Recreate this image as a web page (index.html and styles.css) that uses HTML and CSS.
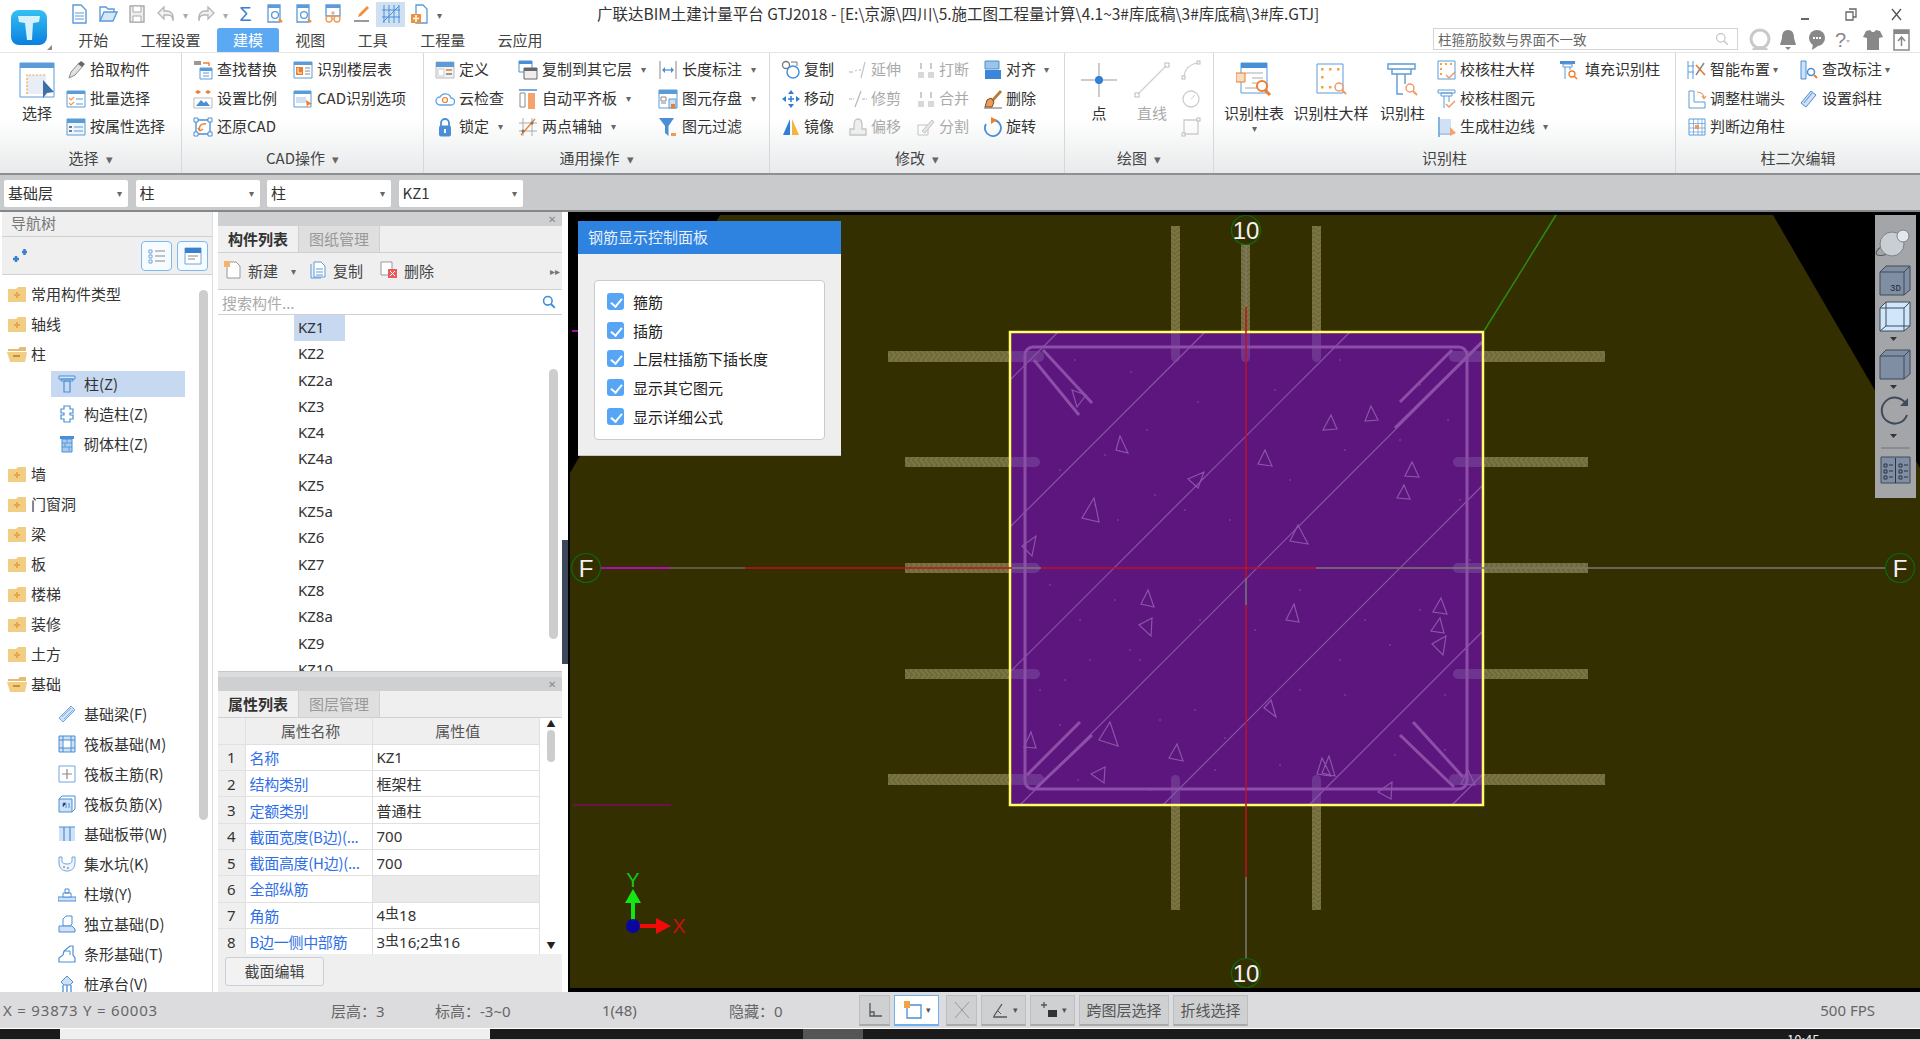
FILE: index.html
```html
<!DOCTYPE html>
<html lang="en">
<head>
    <meta charset="UTF-8">
    <title>广联达BIM土建计量平台 GTJ2018</title>
    <link rel="stylesheet" href="styles.css">
</head>
<body>
    <!-- shared icons -->
    <svg class="defs" width="0" height="0">
        <defs>
            <symbol id="q-new" viewBox="0 0 20 20"><path d="M4 1h8l5 5v13H4z" fill="#fff" stroke="#5b9bd8" stroke-width="1.4"/><path d="M6 9h9M6 12h9M6 15h9" stroke="#5b9bd8"/></symbol>
            <symbol id="q-open" viewBox="0 0 20 20"><path d="M2 17V3h6l2 2h6v3" fill="#fff" stroke="#5b9bd8" stroke-width="1.4"/><path d="M2 17l4-9h13l-4 9z" fill="#d6e8f8" stroke="#5b9bd8" stroke-width="1.4"/></symbol>
            <symbol id="q-save" viewBox="0 0 20 20"><path d="M3 2h14v16H3z" fill="#eee" stroke="#a9a9a9" stroke-width="1.4"/><path d="M6 2h8v6H6zM6 12h8v6H6z" fill="#fff" stroke="#a9a9a9"/></symbol>
            <symbol id="q-undo" viewBox="0 0 20 20"><path d="M8 3L2 9l6 6v-4h4c3 0 5 2 5 6 1-7-2-10-6-10H8z" fill="#f2f2f2" stroke="#b5b5b5" stroke-width="1.3"/></symbol>
            <symbol id="q-redo" viewBox="0 0 20 20"><path d="M12 3l6 6-6 6v-4H8c-3 0-5 2-5 6-1-7 2-10 6-10h3z" fill="#f2f2f2" stroke="#b5b5b5" stroke-width="1.3"/></symbol>
            <symbol id="q-find" viewBox="0 0 20 20"><path d="M3 1h12v17H3z" fill="#fff" stroke="#5b9bd8" stroke-width="1.3"/><path d="M3 1h12v3H3z" fill="#5b9bd8"/><circle cx="10" cy="11" r="3.4" fill="none" stroke="#5b9bd8" stroke-width="1.3"/><path d="M14 15l3 3" stroke="#f0913a" stroke-width="2.4"/></symbol>
            <symbol id="q-glass" viewBox="0 0 20 20"><path d="M3 1h14v11H3z" fill="#fff" stroke="#5b9bd8" stroke-width="1.3"/><path d="M3 1h14v3H3z" fill="#5b9bd8"/><circle cx="6" cy="15" r="3" fill="#fff" stroke="#ef9a55" stroke-width="1.3"/><circle cx="14" cy="15" r="3" fill="#fff" stroke="#ef9a55" stroke-width="1.3"/><path d="M9 15h2M8 9h4M10 7v4" stroke="#ef9a55"/></symbol>
            <symbol id="q-pen" viewBox="0 0 20 20"><path d="M2 17h15" stroke="#777" stroke-width="1.5"/><path d="M6 13l1-3 8-8 2 2-8 8z" fill="#f0913a"/></symbol>
            <symbol id="q-grid" viewBox="0 0 20 20"><path d="M3 1v18M8 1v18M13 1v18M18 1v18M1 6h18M1 13h18M2 18L18 2" stroke="#4a8fd6" fill="none"/></symbol>
            <symbol id="q-plus" viewBox="0 0 20 20"><path d="M6 1h7l4 4v14H6z" fill="#fff" stroke="#5b9bd8" stroke-width="1.3"/><path d="M1 10h10v9H1z" fill="#f0913a"/><path d="M6 11v7M3 14.500h6" stroke="#fff" stroke-width="1.5"/></symbol>

            <symbol id="pick" viewBox="0 0 20 20"><path d="M3 18l2-6 8-9 4 3-8 9z" fill="#e2e2e2" stroke="#8a8a8a"/><path d="M12 4l3-3 4 3-3 3z" fill="#666"/></symbol>
            <symbol id="batch" viewBox="0 0 20 20"><path d="M1 2h18v16H1z" fill="#fff" stroke="#5b9bd8"/><path d="M1 2h18v3H1z" fill="#5b9bd8"/><path d="M3 9l2 2 3-3M3 14l2 2 3-3" fill="none" stroke="#ef9a55" stroke-width="1.200"/><path d="M10 10h7M10 15h7" stroke="#5b9bd8"/></symbol>
            <symbol id="attr" viewBox="0 0 20 20"><path d="M1 2h18v16H1z" fill="#eef5fc" stroke="#5b9bd8"/><path d="M1 2h18v4H1z" fill="#5b9bd8"/><path d="M3 10h3M3 14h3" stroke="#777" stroke-width="2"/><path d="M8 10h9M8 14h9" stroke="#5b9bd8"/></symbol>
            <symbol id="replace" viewBox="0 0 20 20"><path d="M1 1h7v4H1z" fill="#999"/><path d="M10 3h6v3" fill="none" stroke="#ef7d2a" stroke-width="1.400"/><path d="M7 8h12v11H7z" fill="#fff" stroke="#5b9bd8"/><path d="M7 8h12v3H7z" fill="#5b9bd8"/><path d="M10 13h6M10 16h6" stroke="#5b9bd8"/></symbol>
            <symbol id="ftable" viewBox="0 0 20 20"><path d="M1 2h18v16H1z" fill="#fff" stroke="#5b9bd8"/><path d="M1 2h18v3H1z" fill="#5b9bd8"/><path d="M3 7h7v8H3z" fill="#ef7d2a"/><path d="M12 8h5M12 11h5M12 14h5" stroke="#888"/><path d="M5 8v5h4" stroke="#fff" fill="none"/></symbol>
            <symbol id="scale" viewBox="0 0 20 20"><path d="M1 9h18v10H1z" fill="#fff" stroke="#bbb"/><path d="M3 17l5-6 3 3 2-2 4 5z" fill="#4a8fd6"/><path d="M2 3l3-2v4zM8 3l-3-2v4zM12 3l3-2v4zM18 3l-3-2v4z" fill="#ef7d2a"/></symbol>
            <symbol id="cadopt" viewBox="0 0 20 20"><path d="M1 2h17v16H1z" fill="#fff" stroke="#5b9bd8"/><path d="M1 2h17v3H1z" fill="#5b9bd8"/><path d="M3 8h10v6H3z" fill="#cfe0f2"/><path d="M13 11l6 4-4 1-1 3z" fill="#ef7d2a"/></symbol>
            <symbol id="restore" viewBox="0 0 20 20"><path d="M3 3h14v14H3z" fill="#fff" stroke="#4a8fd6" stroke-width="1.300"/><path d="M1 1h4v4H1zM15 1h4v4h-4zM1 15h4v4H1zM15 15h4v4h-4z" fill="#fff" stroke="#4a8fd6"/><path d="M7 14c-2-5 2-8 6-7M7 14l-2-3M7 14l3-2" fill="none" stroke="#ef7d2a" stroke-width="1.400"/></symbol>
            <symbol id="define" viewBox="0 0 20 20"><path d="M1 2h18v16H1z" fill="#f2f2f2" stroke="#bbb"/><path d="M1 2h18v5H1z" fill="#5b9bd8"/><path d="M3 9h6v7H3z" fill="#fff" stroke="#ccc"/><path d="M11 10h6" stroke="#ef9a55" stroke-width="2"/><path d="M11 14h6" stroke="#999" stroke-width="2"/></symbol>
            <symbol id="cloud" viewBox="0 0 20 20"><path d="M5 16a4 4 0 0 1 0-8 6 6 0 0 1 11 1 3.500 3.500 0 0 1 0 7z" fill="#fff" stroke="#5ea5e8" stroke-width="1.300"/><circle cx="10" cy="11" r="2.500" fill="none" stroke="#ef7d2a" stroke-width="1.200"/></symbol>
            <symbol id="lock" viewBox="0 0 20 20"><path d="M6 9V6a4 4 0 0 1 8 0v3" fill="none" stroke="#4a8fd6" stroke-width="1.800"/><rect x="4" y="8.500" width="12" height="11" rx="2" fill="#4a8fd6"/><path d="M10 12v4" stroke="#fff" stroke-width="2"/></symbol>
            <symbol id="cfloor" viewBox="0 0 20 20"><path d="M1 1h13v11H1z" fill="#fff" stroke="#4a8fd6"/><path d="M1 1h13v3H1z" fill="#4a8fd6"/><path d="M6 8h13v11H6z" fill="#eee" stroke="#666"/><path d="M6 8h13v3H6z" fill="#666"/></symbol>
            <symbol id="autoal" viewBox="0 0 20 20"><path d="M1 1h18" stroke="#4a8fd6" stroke-width="1.500"/><path d="M2 4h5v14H2z" fill="#fff" stroke="#8a8a8a"/><path d="M10 4h7v16h-7z" fill="#f5a36b"/></symbol>
            <symbol id="twop" viewBox="0 0 20 20"><path d="M5 1v18M14 1v18M1 6h18M1 14h18" stroke="#aaa" fill="none"/><path d="M3 18L17 2" stroke="#ef7d2a" stroke-width="1.300"/><circle cx="5" cy="14" r="1.500" fill="#777"/><circle cx="14" cy="6" r="1.500" fill="#777"/></symbol>
            <symbol id="dim" viewBox="0 0 20 20"><path d="M2 1v18M18 1v18" stroke="#888"/><path d="M5 10h10" stroke="#4a8fd6" stroke-width="1.300"/><path d="M4 10l3-3v6zM16 10l-3-3v6z" fill="#4a8fd6"/></symbol>
            <symbol id="esave" viewBox="0 0 20 20"><path d="M1 1h18v18H1z" fill="#fff" stroke="#5b9bd8"/><path d="M1 1h18v4H1z" fill="#5b9bd8"/><path d="M3 8h5v4H3zM3 14h5" fill="none" stroke="#888"/><path d="M11 10h7v9h-7z" fill="#cfe0f2" stroke="#5b9bd8"/><path d="M13 15h4v4h-4z" fill="#ef7d2a"/></symbol>
            <symbol id="filter" viewBox="0 0 20 20"><path d="M1 1h15L10.500 9v10L7 16V9z" fill="#4a8fd6"/><path d="M13 16h5v3h-5z" fill="#ef9a55"/></symbol>

            <symbol id="copy" viewBox="0 0 20 20"><circle cx="5" cy="5" r="3.500" fill="none" stroke="#777" stroke-width="1.300"/><circle cx="12" cy="12" r="6" fill="none" stroke="#4a8fd6" stroke-width="1.500"/><path d="M10 2h6v4" fill="none" stroke="#777"/></symbol>
            <symbol id="move" viewBox="0 0 20 20"><path d="M10 1l3 4H7zM10 19l3-4H7zM1 10l4-3v6zM19 10l-4-3v6z" fill="#2f7fd6"/><path d="M7 10h6M10 7v6" stroke="#2f7fd6" stroke-width="1.500"/></symbol>
            <symbol id="mirror" viewBox="0 0 20 20"><path d="M9 2v16H2z" fill="#2f7fd6"/><path d="M11 2v16h7z" fill="#f3b53a"/></symbol>
            <symbol id="extend" viewBox="0 0 20 20"><path d="M1 12h4M7 11l2-1M11 10h2" stroke="#ccc" stroke-width="1.300"/><path d="M17 2l-4 16" stroke="#c8c8c8" stroke-width="1.300"/></symbol>
            <symbol id="trim" viewBox="0 0 20 20"><path d="M1 10h5M14 10h5" stroke="#ccc" stroke-width="1.300" stroke-dasharray="3 1"/><path d="M13 2L7 18" stroke="#bbb" stroke-width="1.300"/></symbol>
            <symbol id="brk" viewBox="0 0 20 20"><path d="M2 12h6v6H2zM12 12h6v6h-6z" fill="#d8d8d8"/><path d="M5 3v6M15 3v6" stroke="#ccc" stroke-width="2"/></symbol>
            <symbol id="offset" viewBox="0 0 20 20"><path d="M6 8c0-8 8-8 8 0v4h4v6H2v-6h4z" fill="#eee" stroke="#c4c4c4" stroke-width="1.300"/></symbol>
            <symbol id="split" viewBox="0 0 20 20"><path d="M2 18V8h10v10z" fill="none" stroke="#c4c4c4"/><path d="M6 14l10-11 2 2L9 16z" fill="#e4e4e4" stroke="#c4c4c4"/></symbol>
            <symbol id="align" viewBox="0 0 20 20"><path d="M2 1h14v8H2z" fill="#9cc3ea" stroke="#4a8fd6"/><path d="M2 10h16v9H2z" fill="#3b86d8"/></symbol>
            <symbol id="delb" viewBox="0 0 20 20"><path d="M8 11L17 1l2 2-9 10z" fill="#b87a3a"/><path d="M4 11l4-2 3 4-2 5H2z" fill="#ef9a55" stroke="#7a4c20"/><path d="M1 19h18" stroke="#666"/></symbol>
            <symbol id="rotate" viewBox="0 0 20 20"><path d="M10 3a8 8 0 1 1-7 4" fill="none" stroke="#4a8fd6" stroke-width="1.800"/><path d="M8 0l6 3-6 4z" fill="#ef7d2a"/></symbol>

            <symbol id="point" viewBox="0 0 36 36"><path d="M18 1v34M0 18h36" stroke="#999" stroke-width="1"/><circle cx="18" cy="18" r="4" fill="#2f7fd6"/></symbol>
            <symbol id="dline" viewBox="0 0 36 36"><path d="M3 33L33 3" stroke="#d0d0d0" stroke-width="1.300"/><rect x="1" y="31" width="4" height="4" fill="#fff" stroke="#bbb"/><rect x="31" y="1" width="4" height="4" fill="#fff" stroke="#bbb"/></symbol>
            <symbol id="darc" viewBox="0 0 20 20"><path d="M3 18c0-8 5-14 14-15" fill="none" stroke="#ccc" stroke-width="1.200"/><rect x="1" y="16" width="3" height="3" fill="#fff" stroke="#bbb"/><rect x="16" y="1" width="3" height="3" fill="#fff" stroke="#bbb"/></symbol>
            <symbol id="dcirc" viewBox="0 0 20 20"><circle cx="10" cy="10" r="8" fill="none" stroke="#ccc" stroke-width="1.300"/><path d="M10 10l4-4" stroke="#ccc"/></symbol>
            <symbol id="drect" viewBox="0 0 20 20"><path d="M3 3h14v14H3z" fill="none" stroke="#ccc" stroke-width="1.300"/><rect x="1" y="16" width="3" height="3" fill="#fff" stroke="#bbb"/><rect x="16" y="1" width="3" height="3" fill="#fff" stroke="#bbb"/></symbol>

            <symbol id="r-table" viewBox="0 0 36 36"><path d="M5 1h26v30H5z" fill="#fff" stroke="#5b9bd8"/><path d="M5 1h26v5H5z" fill="#4a8fd6"/><path d="M9 11h18M16 16h11M16 21h6M9 26h12" stroke="#aaa"/><path d="M0 11h9v9H0z" fill="#f7dcc4" stroke="#ef7d2a"/><circle cx="26" cy="24" r="5" fill="#fff" stroke="#ef7d2a" stroke-width="2"/><path d="M29 28l5 5" stroke="#ef7d2a" stroke-width="3"/></symbol>
            <symbol id="r-big" viewBox="0 0 36 36"><path d="M4 2h26v29H4z" fill="none" stroke="#5b9bd8"/><g fill="#f3a33f"><rect x="8" y="6" width="2.500" height="2.500"/><rect x="16" y="6" width="2.500" height="2.500"/><rect x="24" y="6" width="2.500" height="2.500"/><rect x="8" y="14" width="2.500" height="2.500"/><rect x="8" y="24" width="2.500" height="2.500"/><rect x="16" y="24" width="2.500" height="2.500"/></g><circle cx="26" cy="25" r="4" fill="#fff" stroke="#ef9a6b" stroke-width="1.500"/><path d="M29 28l4 4" stroke="#ef9a6b" stroke-width="2"/></symbol>
            <symbol id="r-col" viewBox="0 0 36 36"><path d="M3 2h27v5H3zM7 7h19v5H7z" fill="#fff" stroke="#5b9bd8" stroke-width="1.400"/><path d="M12 12v20h6M20 12v10" fill="none" stroke="#5b9bd8" stroke-width="1.400"/><circle cx="25" cy="26" r="4" fill="#fff" stroke="#ef9a6b" stroke-width="1.500"/><path d="M28 29l4 4" stroke="#ef9a6b" stroke-width="2"/></symbol>
            <symbol id="c-sample" viewBox="0 0 20 20"><path d="M1 1h17v18H1z" fill="none" stroke="#5b9bd8"/><g fill="#f3a33f"><rect x="3" y="3" width="2" height="2"/><rect x="8" y="3" width="2" height="2"/><rect x="13" y="3" width="2" height="2"/><rect x="3" y="8" width="2" height="2"/><rect x="3" y="13" width="2" height="2"/></g><path d="M9 15l3 3 6-6" fill="none" stroke="#ef9a6b" stroke-width="1.500"/></symbol>
            <symbol id="c-elem" viewBox="0 0 20 20"><path d="M1 1h17v3H1zM4 4h11v3H4z" fill="#fff" stroke="#5b9bd8"/><path d="M7 7v12M12 7v6" stroke="#5b9bd8" fill="none"/><path d="M9 15l3 3 6-6" fill="none" stroke="#ef9a6b" stroke-width="1.500"/></symbol>
            <symbol id="c-edge" viewBox="0 0 20 20"><path d="M3 2h11v14H3z" fill="#cfe0f7"/><path d="M2 0v20" stroke="#5b9bd8" stroke-width="1.500"/><path d="M2 17h11" stroke="#5b9bd8"/><path d="M13 10l6 6-6 3z" fill="#f5a36b"/></symbol>
            <symbol id="c-fill" viewBox="0 0 20 20"><path d="M1 1h15v3H1z" fill="#4a8fd6"/><path d="M4 4h9v3H4z" fill="#fff" stroke="#5b9bd8"/><path d="M6 7v12M11 7v3" stroke="#5b9bd8"/><circle cx="13" cy="14" r="3" fill="#fff" stroke="#ef7d2a" stroke-width="1.300"/><path d="M15 16l3 3" stroke="#ef7d2a" stroke-width="1.600"/></symbol>
            <symbol id="smart" viewBox="0 0 20 20"><path d="M1 1v18M6 1v18M1 6h6M1 12h6" stroke="#5b9bd8" fill="none"/><path d="M9 5l9 10" stroke="#ef7d2a" stroke-width="1.800"/><path d="M17 3L9 15" stroke="#888" stroke-width="1.500"/></symbol>
            <symbol id="cdim" viewBox="0 0 20 20"><path d="M2 1h5v18H2z" fill="#cfe0f7" stroke="#4a8fd6"/><circle cx="12" cy="12" r="3.500" fill="#fff" stroke="#4a8fd6" stroke-width="1.500"/><path d="M15 15l3 3" stroke="#ef7d2a" stroke-width="2"/></symbol>
            <symbol id="adj" viewBox="0 0 20 20"><path d="M2 2h5v11h11v6H2z" fill="#fff" stroke="#5b9bd8"/><path d="M10 3c4 0 7 2 7 7M17 10l-2-3M17 10l2-3" fill="none" stroke="#ef9a55" stroke-width="1.200"/></symbol>
            <symbol id="slant" viewBox="0 0 20 20"><path d="M2 14L12 2l5 4-10 12z" fill="#cfe0f7" stroke="#4a8fd6"/><path d="M5 14l8-10" stroke="#4a8fd6"/></symbol>
            <symbol id="corner" viewBox="0 0 20 20"><path d="M2 2h16v16H2z" fill="#fff" stroke="#5b9bd8"/><path d="M2 6.500h16M2 11h16M2 15h16M6.500 2v16M11 2v16M15 2v16" stroke="#5b9bd8" stroke-width=".7"/><path d="M8 8h4v4H8z" fill="#ef9a55"/></symbol>

            <symbol id="f-plus" viewBox="0 0 18 18"><path d="M0 4h8l2-2h8v15H0z" fill="#f2cd84"/><path d="M9 7v6M6 10h6" stroke="#e6a74b" stroke-width="2"/></symbol>
            <symbol id="f-minus" viewBox="0 0 20 18"><path d="M1 4h10l2-2h6v4H1z" fill="#e6bd70"/><path d="M0 7h20l-2 10H3z" fill="#f2cd84"/><path d="M6 11h7" stroke="#c98f35" stroke-width="2"/></symbol>
            <symbol id="t-col" viewBox="0 0 18 18"><path d="M1 1h16v3H1zM3 4h12v2H3z" fill="#d6e8f8" stroke="#4a8fd6"/><path d="M6 6h6v11H6z" fill="none" stroke="#4a8fd6" stroke-width="1.200"/></symbol>
            <symbol id="t-struct" viewBox="0 0 18 18"><path d="M6 1h6v3h3v4h-3v2h3v4h-3v3H6v-3H3v-4h3V8H3V4h3z" fill="#fff" stroke="#4a8fd6" stroke-width="1.200"/></symbol>
            <symbol id="t-mason" viewBox="0 0 18 18"><path d="M2 1h14v3H2z" fill="#4a8fd6"/><path d="M4 4h10v13H4z" fill="#a9cbee" stroke="#4a8fd6"/><path d="M4 8h10M4 12h10M9 4v4M7 8v4M11 12v4" stroke="#4a8fd6" stroke-width=".8"/></symbol>
            <symbol id="t-beam" viewBox="0 0 18 18"><path d="M1 13L13 1l4 4L5 17z" fill="#cfe0f7" stroke="#6da6e0"/><path d="M4 12L13 3M6 14l9-9" stroke="#6da6e0" stroke-width=".8"/></symbol>
            <symbol id="t-raft" viewBox="0 0 18 18"><path d="M1 1h16v16H1z" fill="#cfe0f7" stroke="#4a8fd6"/><path d="M5 5h8v8H5z" fill="#fff" stroke="#4a8fd6"/><path d="M1 5h4M13 5h4M1 13h4M13 13h4M5 1v4M13 1v4M5 13v4M13 13v4" stroke="#4a8fd6"/></symbol>
            <symbol id="t-main" viewBox="0 0 18 18"><path d="M1 1h16v16H1z" fill="#fff" stroke="#6da6e0"/><path d="M9 4v10M4 9h10" stroke="#8a8a8a" stroke-width="1.200"/></symbol>
            <symbol id="t-neg" viewBox="0 0 18 18"><path d="M1 4h13v13H1z" fill="#cfe0f7" stroke="#4a8fd6"/><path d="M1 4l3-3h13v13l-3 3" fill="none" stroke="#4a8fd6"/><path d="M5 12V8h3M8 8v5M11 8v5" stroke="#4a8fd6"/></symbol>
            <symbol id="t-band" viewBox="0 0 18 18"><path d="M1 2h16v14H1z" fill="#cfe0f7"/><path d="M1 2h16M6 2v14M12 2v14" stroke="#4a8fd6" stroke-width="1.200"/></symbol>
            <symbol id="t-sump" viewBox="0 0 18 18"><path d="M1 2v5c0 6 3 9 8 9s8-3 8-9V2h-3v4c0 2-2 3-5 3S4 8 4 6V2z" fill="#eef5fc" stroke="#6da6e0"/><circle cx="6" cy="12" r="1" fill="#999"/><circle cx="10" cy="13" r="1" fill="#999"/></symbol>
            <symbol id="t-pier" viewBox="0 0 18 18"><path d="M0 12h18v4H0z" fill="#cfe0f7" stroke="#4a8fd6"/><path d="M5 8h8v4H5zM7 4h4v4H7z" fill="#fff" stroke="#4a8fd6"/></symbol>
            <symbol id="t-iso" viewBox="0 0 18 18"><path d="M5 4l3-3h6v8l-2 2H5z" fill="#fff" stroke="#4a8fd6"/><path d="M1 11h13l3 3v3H1z" fill="#cfe0f7" stroke="#4a8fd6"/></symbol>
            <symbol id="t-strip" viewBox="0 0 18 18"><path d="M1 17v-4l4-3 1-4 6-5h3v9l2 3v4z" fill="#fff" stroke="#4a8fd6" stroke-width="1.200"/><path d="M6 6h6v4" fill="none" stroke="#4a8fd6"/></symbol>
            <symbol id="t-cap" viewBox="0 0 18 18"><path d="M9 1l6 6-3 3H6L3 7z" fill="#cfe0f7" stroke="#4a8fd6"/><path d="M5 10v7M9 10v7M13 10v7" stroke="#4a8fd6" stroke-width="1.300"/></symbol>

            <symbol id="x-new" viewBox="0 0 18 18"><path d="M3 1h9l4 4v12H3z" fill="#fff" stroke="#999"/><path d="M0 0h6v6H0z" fill="#f7b36b"/></symbol>
            <symbol id="x-copy" viewBox="0 0 18 18"><path d="M2 3v14h10" fill="none" stroke="#5b9bd8"/><path d="M5 1h7l4 4v11H5z" fill="#fff" stroke="#5b9bd8"/><path d="M7 8h7M7 11h7M7 14h7" stroke="#5b9bd8"/></symbol>
            <symbol id="x-del" viewBox="0 0 18 18"><path d="M1 1h11v13H1z" fill="#fff" stroke="#999"/><path d="M8 8h9v9H8z" fill="#e85b5b"/><path d="M10 10l5 5M15 10l-5 5" stroke="#fff"/></symbol>
            <symbol id="search" viewBox="0 0 18 18"><circle cx="7.500" cy="7.500" r="5.500" fill="none" stroke="#3d8fd8" stroke-width="2"/><path d="M11.500 11.500l5 5" stroke="#3d8fd8" stroke-width="2.500"/></symbol>

            <pattern id="rebar-h" width="10" height="10" patternUnits="userSpaceOnUse">
                <rect width="10" height="10" fill="#6f6a38"/>
                <path d="M0 0l5 5-5 5M5 0l5 5-5 5" fill="none" stroke="#7d7845" stroke-width="1.500"/>
            </pattern>
            <pattern id="rebar-v" width="9" height="9" patternUnits="userSpaceOnUse">
                <rect width="9" height="9" fill="#6f6a38"/>
                <path d="M0 0l4.500 4.500 4.500-4.500M0 4.500l4.500 4.500 4.500-4.500" fill="none" stroke="#7d7845" stroke-width="1.400"/>
            </pattern>
        </defs>
    </svg>

    <div class="top">
        <div class="logo-box">
            <svg class="logo" viewBox="0 0 36 35"><defs><linearGradient id="logo-g" x1="0" y1="0" x2="0" y2="1"><stop offset="0" stop-color="#36c0f2"/><stop offset="1" stop-color="#0a7fe0"/></linearGradient></defs><rect width="36" height="35" rx="8" fill="url(#logo-g)"/><path d="M7 6h22l-1 6-6 1-1 17h-5l-2-17-6-1z" fill="#d5f1fc"/></svg>
            <span class="logo-grip"></span>
        </div>
        <div class="top-main">
            <div class="title-row">
                <div class="quick">
                    <span class="q"><svg class="ico"><use href="#q-new"/></svg></span>
                    <span class="q"><svg class="ico"><use href="#q-open"/></svg></span>
                    <span class="q"><svg class="ico"><use href="#q-save"/></svg></span>
                    <span class="q"><svg class="ico"><use href="#q-undo"/></svg></span>
                    <span class="q-caret">▾</span>
                    <span class="q"><svg class="ico"><use href="#q-redo"/></svg></span>
                    <span class="q-caret">▾</span>
                    <span class="q q-sigma">Σ</span>
                    <span class="q"><svg class="ico"><use href="#q-find"/></svg></span>
                    <span class="q"><svg class="ico"><use href="#q-find"/></svg></span>
                    <span class="q"><svg class="ico"><use href="#q-glass"/></svg></span>
                    <span class="q"><svg class="ico"><use href="#q-pen"/></svg></span>
                    <span class="q q-on"><svg class="ico"><use href="#q-grid"/></svg></span>
                    <span class="q"><svg class="ico"><use href="#q-plus"/></svg></span>
                    <span class="q-caret q-more">▾</span>
                </div>
                <div class="app-title">广联达BIM土建计量平台 GTJ2018 - [E:\京源\四川\5.施工图工程量计算\4.1~3#库底稿\3#库底稿\3#库.GTJ]</div>
                <svg class="win-btns" viewBox="0 0 136 28"><path d="M17 19h8" stroke="#666" stroke-width="2"/><path d="M65 9h7v8h-3M62 12h7v8h-7z" fill="none" stroke="#666" stroke-width="1.300"/><path d="M108 9l9 11M117 9l-9 11" stroke="#555" stroke-width="1.300"/></svg>
            </div>
            <div class="tab-row">
                <div class="tab">开始</div>
                <div class="tab">工程设置</div>
                <div class="tab tab-on">建模</div>
                <div class="tab">视图</div>
                <div class="tab">工具</div>
                <div class="tab">工程量</div>
                <div class="tab">云应用</div>
                <div class="help-search">
                    <span>柱箍筋胶数与界面不一致</span>
                    <svg class="help-glass" viewBox="0 0 18 18"><circle cx="7.500" cy="7.500" r="5.500" fill="none" stroke="#c4c4c4" stroke-width="1.500"/><path d="M11.500 11.500l5 5" stroke="#c4c4c4" stroke-width="1.800"/></svg>
                </div>
                <svg class="help-icons" viewBox="0 0 182 24">
                    <circle cx="22" cy="11" r="9" fill="none" stroke="#c9c9c9" stroke-width="3"/><path d="M14 22c1-5 15-5 16 0z" fill="#c9c9c9"/>
                    <path d="M50 2c-5 0-6 4-6 8l-2 7h16l-2-7c0-4-1-8-6-8zM47 19h6l-3 3z" fill="#888"/>
                    <ellipse cx="79" cy="10" rx="8" ry="8" fill="#888"/><path d="M75 16l-1 6 6-4z" fill="#888"/><path d="M75 10h8" stroke="#fff" stroke-width="2" stroke-dasharray="2 1"/>
                    <text x="97" y="19" class="help-q">?</text><path d="M108 12h4l-2 3z" fill="#bbb"/>
                    <path d="M128 3l4-1 2 2h2l2-2 4 1 3 6-4 1v12h-12V10l-4-1z" fill="#888"/>
                    <path d="M156 2h15v20h-15z" fill="#fff" stroke="#888" stroke-width="1.500"/><path d="M156 2h15v4h-15z" fill="#888"/><path d="M163.500 18v-8M160 13l3.500-4 3.500 4" fill="none" stroke="#888" stroke-width="1.500"/>
                </svg>
            </div>
        </div>
    </div>

    <div class="ribbon">
        <section class="group g-select">
            <div class="tools">
                <div class="big">
                    <svg class="ico-big" viewBox="0 0 36 36"><path d="M1 1h34v34H1z" fill="#fff" stroke="#5b9bd8"/><path d="M1 1h34v5H1z" fill="#5b9bd8"/><path d="M8 13h19v19H8z" fill="#e8eef6"/><path d="M8 32V13h19" fill="none" stroke="#f3a33f" stroke-width="1.200" stroke-dasharray="2 1.500"/><path d="M24 18l11 12-7 1-4 5z" fill="#3d6fa8"/></svg>
                    <span>选择</span>
                </div>
                <div class="tool"><svg class="ico"><use href="#pick"/></svg>拾取构件</div>
                <div class="tool"><svg class="ico"><use href="#batch"/></svg>批量选择</div>
                <div class="tool"><svg class="ico"><use href="#attr"/></svg>按属性选择</div>
            </div>
            <div class="group-name">选择<i>▾</i></div>
        </section>

        <section class="group g-cad">
            <div class="tools">
                <div class="tool"><svg class="ico"><use href="#replace"/></svg>查找替换</div>
                <div class="tool"><svg class="ico"><use href="#ftable"/></svg>识别楼层表</div>
                <div class="tool"><svg class="ico"><use href="#scale"/></svg>设置比例</div>
                <div class="tool"><svg class="ico"><use href="#cadopt"/></svg>CAD识别选项</div>
                <div class="tool"><svg class="ico"><use href="#restore"/></svg>还原CAD</div>
            </div>
            <div class="group-name">CAD操作<i>▾</i></div>
        </section>

        <section class="group g-common">
            <div class="tools">
                <div class="tool"><svg class="ico"><use href="#define"/></svg>定义</div>
                <div class="tool"><svg class="ico"><use href="#cfloor"/></svg>复制到其它层<i>▾</i></div>
                <div class="tool"><svg class="ico"><use href="#dim"/></svg>长度标注<i>▾</i></div>
                <div class="tool"><svg class="ico"><use href="#cloud"/></svg>云检查</div>
                <div class="tool"><svg class="ico"><use href="#autoal"/></svg>自动平齐板<i>▾</i></div>
                <div class="tool"><svg class="ico"><use href="#esave"/></svg>图元存盘<i>▾</i></div>
                <div class="tool"><svg class="ico"><use href="#lock"/></svg>锁定<i>▾</i></div>
                <div class="tool"><svg class="ico"><use href="#twop"/></svg>两点辅轴<i>▾</i></div>
                <div class="tool"><svg class="ico"><use href="#filter"/></svg>图元过滤</div>
            </div>
            <div class="group-name">通用操作<i>▾</i></div>
        </section>

        <section class="group g-modify">
            <div class="tools">
                <div class="tool"><svg class="ico"><use href="#copy"/></svg>复制</div>
                <div class="tool off"><svg class="ico"><use href="#extend"/></svg>延伸</div>
                <div class="tool off"><svg class="ico"><use href="#brk"/></svg>打断</div>
                <div class="tool"><svg class="ico"><use href="#align"/></svg>对齐<i>▾</i></div>
                <div class="tool"><svg class="ico"><use href="#move"/></svg>移动</div>
                <div class="tool off"><svg class="ico"><use href="#trim"/></svg>修剪</div>
                <div class="tool off"><svg class="ico"><use href="#brk"/></svg>合并</div>
                <div class="tool"><svg class="ico"><use href="#delb"/></svg>删除</div>
                <div class="tool"><svg class="ico"><use href="#mirror"/></svg>镜像</div>
                <div class="tool off"><svg class="ico"><use href="#offset"/></svg>偏移</div>
                <div class="tool off"><svg class="ico"><use href="#split"/></svg>分割</div>
                <div class="tool"><svg class="ico"><use href="#rotate"/></svg>旋转</div>
            </div>
            <div class="group-name">修改<i>▾</i></div>
        </section>

        <section class="group g-draw">
            <div class="tools">
                <div class="big"><svg class="ico-big"><use href="#point"/></svg><span>点</span></div>
                <div class="big off"><svg class="ico-big"><use href="#dline"/></svg><span>直线</span></div>
                <div class="tool"><svg class="ico"><use href="#darc"/></svg></div>
                <div class="tool"><svg class="ico"><use href="#dcirc"/></svg></div>
                <div class="tool"><svg class="ico"><use href="#drect"/></svg></div>
            </div>
            <div class="group-name">绘图<i>▾</i></div>
        </section>

        <section class="group g-recog">
            <div class="tools">
                <div class="big"><svg class="ico-big"><use href="#r-table"/></svg><span>识别柱表</span><i>▾</i></div>
                <div class="big"><svg class="ico-big"><use href="#r-big"/></svg><span>识别柱大样</span></div>
                <div class="big"><svg class="ico-big"><use href="#r-col"/></svg><span>识别柱</span></div>
                <div class="tool"><svg class="ico"><use href="#c-sample"/></svg>校核柱大样</div>
                <div class="tool"><svg class="ico"><use href="#c-fill"/></svg>填充识别柱</div>
                <div class="tool"><svg class="ico"><use href="#c-elem"/></svg>校核柱图元</div>
                <div class="tool"></div>
                <div class="tool"><svg class="ico"><use href="#c-edge"/></svg>生成柱边线<i>▾</i></div>
            </div>
            <div class="group-name">识别柱</div>
        </section>

        <section class="group g-second">
            <div class="tools">
                <div class="tool"><svg class="ico"><use href="#smart"/></svg>智能布置<i>▾</i></div>
                <div class="tool"><svg class="ico"><use href="#cdim"/></svg>查改标注<i>▾</i></div>
                <div class="tool"><svg class="ico"><use href="#adj"/></svg>调整柱端头</div>
                <div class="tool"><svg class="ico"><use href="#slant"/></svg>设置斜柱</div>
                <div class="tool"><svg class="ico"><use href="#corner"/></svg>判断边角柱</div>
            </div>
            <div class="group-name">柱二次编辑</div>
        </section>
    </div>

    <div class="combo-bar">
        <div class="combo">基础层<i>▾</i></div>
        <div class="combo">柱<i>▾</i></div>
        <div class="combo">柱<i>▾</i></div>
        <div class="combo">KZ1<i>▾</i></div>
    </div>

    <div class="main">
        <aside class="nav">
            <div class="nav-head">导航树</div>
            <div class="nav-tools">
                <svg class="nav-pin" viewBox="0 0 18 16"><path d="M3 11h6M6 8v6M12 4h5M14.500 1v6" stroke="#3b7fd0" stroke-width="2.500"/></svg>
                <span class="view-btn"><svg viewBox="0 0 20 20"><path d="M2 4h3v3H2zM2 9h3v3H2zM2 14h3v3H2z" fill="none" stroke="#6fa6dc"/><path d="M8 5h10M8 10h10M8 15h10" stroke="#888"/></svg></span>
                <span class="view-btn"><svg viewBox="0 0 20 20"><path d="M2 2h16v16H2z" fill="#fff" stroke="#6fa6dc"/><path d="M2 2h16v5H2z" fill="#3b7fd0"/><path d="M5 10h10M5 13h7" stroke="#888"/></svg></span>
            </div>
            <div class="tree">
                <div class="tree-thumb"></div>
                <div class="node"><svg class="folder"><use href="#f-plus"/></svg>常用构件类型</div>
                <div class="node"><svg class="folder"><use href="#f-plus"/></svg>轴线</div>
                <div class="node"><svg class="folder"><use href="#f-minus"/></svg>柱</div>
                <div class="node leaf leaf-on"><svg class="leaf-ico"><use href="#t-col"/></svg>柱(Z)</div>
                <div class="node leaf"><svg class="leaf-ico"><use href="#t-struct"/></svg>构造柱(Z)</div>
                <div class="node leaf"><svg class="leaf-ico"><use href="#t-mason"/></svg>砌体柱(Z)</div>
                <div class="node"><svg class="folder"><use href="#f-plus"/></svg>墙</div>
                <div class="node"><svg class="folder"><use href="#f-plus"/></svg>门窗洞</div>
                <div class="node"><svg class="folder"><use href="#f-plus"/></svg>梁</div>
                <div class="node"><svg class="folder"><use href="#f-plus"/></svg>板</div>
                <div class="node"><svg class="folder"><use href="#f-plus"/></svg>楼梯</div>
                <div class="node"><svg class="folder"><use href="#f-plus"/></svg>装修</div>
                <div class="node"><svg class="folder"><use href="#f-plus"/></svg>土方</div>
                <div class="node"><svg class="folder"><use href="#f-minus"/></svg>基础</div>
                <div class="node leaf"><svg class="leaf-ico"><use href="#t-beam"/></svg>基础梁(F)</div>
                <div class="node leaf"><svg class="leaf-ico"><use href="#t-raft"/></svg>筏板基础(M)</div>
                <div class="node leaf"><svg class="leaf-ico"><use href="#t-main"/></svg>筏板主筋(R)</div>
                <div class="node leaf"><svg class="leaf-ico"><use href="#t-neg"/></svg>筏板负筋(X)</div>
                <div class="node leaf"><svg class="leaf-ico"><use href="#t-band"/></svg>基础板带(W)</div>
                <div class="node leaf"><svg class="leaf-ico"><use href="#t-sump"/></svg>集水坑(K)</div>
                <div class="node leaf"><svg class="leaf-ico"><use href="#t-pier"/></svg>柱墩(Y)</div>
                <div class="node leaf"><svg class="leaf-ico"><use href="#t-iso"/></svg>独立基础(D)</div>
                <div class="node leaf"><svg class="leaf-ico"><use href="#t-strip"/></svg>条形基础(T)</div>
                <div class="node leaf"><svg class="leaf-ico"><use href="#t-cap"/></svg>桩承台(V)</div>
            </div>
        </aside>

        <div class="mid">
            <section class="panel panel-list">
                <div class="panel-bar">✕</div>
                <div class="panel-tabs"><span class="ptab ptab-on">构件列表</span><span class="ptab">图纸管理</span></div>
                <div class="list-tools">
                    <span class="lt lt-new"><svg class="ico-sm"><use href="#x-new"/></svg>新建<i>▾</i></span>
                    <span class="lt lt-copy"><svg class="ico-sm"><use href="#x-copy"/></svg>复制</span>
                    <span class="lt lt-del"><svg class="ico-sm"><use href="#x-del"/></svg>删除</span>
                    <span class="lt-more">▸▸</span>
                </div>
                <div class="list-search"><span>搜索构件...</span><svg class="ico-search"><use href="#search"/></svg></div>
                <div class="items">
                    <div class="items-thumb"></div>
                    <div class="item item-on">KZ1</div>
                    <div class="item">KZ2</div>
                    <div class="item">KZ2a</div>
                    <div class="item">KZ3</div>
                    <div class="item">KZ4</div>
                    <div class="item">KZ4a</div>
                    <div class="item">KZ5</div>
                    <div class="item">KZ5a</div>
                    <div class="item">KZ6</div>
                    <div class="item">KZ7</div>
                    <div class="item">KZ8</div>
                    <div class="item">KZ8a</div>
                    <div class="item">KZ9</div>
                    <div class="item">KZ10</div>
                </div>
            </section>
            <section class="panel panel-props">
                <div class="panel-bar">✕</div>
                <div class="panel-tabs"><span class="ptab ptab-on">属性列表</span><span class="ptab">图层管理</span></div>
                <div class="props">
                    <table class="props-table">
                        <tr class="head"><th class="idx"></th><th class="pname">属性名称</th><th class="pval">属性值</th></tr>
                        <tr><td class="idx">1</td><td class="pname">名称</td><td class="pval">KZ1</td></tr>
                        <tr><td class="idx">2</td><td class="pname">结构类别</td><td class="pval">框架柱</td></tr>
                        <tr><td class="idx">3</td><td class="pname">定额类别</td><td class="pval">普通柱</td></tr>
                        <tr><td class="idx">4</td><td class="pname">截面宽度(B边)(...</td><td class="pval">700</td></tr>
                        <tr><td class="idx">5</td><td class="pname">截面高度(H边)(...</td><td class="pval">700</td></tr>
                        <tr class="group-row"><td class="idx">6</td><td class="pname">全部纵筋</td><td class="pval"></td></tr>
                        <tr><td class="idx">7</td><td class="pname">角筋</td><td class="pval">4<b>虫</b>18</td></tr>
                        <tr><td class="idx">8</td><td class="pname">B边一侧中部筋</td><td class="pval">3<b>虫</b>16;2<b>虫</b>16</td></tr>
                    </table>
                    <div class="props-scroll"><span class="arr">▲</span><span class="props-thumb"></span><span class="arr arr-down">▼</span></div>
                </div>
                <div class="props-foot"><span class="foot-btn">截面编辑</span></div>
            </section>
        </div>

        <div class="splitter"><span class="grip"></span></div>

        <div class="canvas">
            <svg class="drawing" viewBox="568 212 1352 780">
                <rect x="568" y="212" width="1352" height="780" fill="#000"/>
                <path d="M570 215H1920V988H570z" fill="#332f00"/>
                <path d="M568 215h152L570 473H568zM1773 215h147v253z" fill="#000"/>

                <!-- rebars outside the column -->
                <g fill="url(#rebar-h)">
                    <rect x="888" y="351" width="122" height="11"/>
                    <rect x="905" y="457" width="105" height="10"/>
                    <rect x="905" y="563" width="105" height="10"/>
                    <rect x="905" y="669" width="105" height="10"/>
                    <rect x="888" y="774" width="122" height="11"/>
                    <rect x="1484" y="351" width="121" height="11"/>
                    <rect x="1484" y="457" width="104" height="10"/>
                    <rect x="1484" y="563" width="104" height="10"/>
                    <rect x="1484" y="669" width="104" height="10"/>
                    <rect x="1484" y="774" width="121" height="11"/>
                </g>
                <g fill="url(#rebar-v)">
                    <rect x="1171" y="226" width="9" height="105"/>
                    <rect x="1241" y="226" width="9" height="105"/>
                    <rect x="1312" y="226" width="9" height="105"/>
                    <rect x="1171" y="806" width="9" height="104"/>
                    <rect x="1312" y="806" width="9" height="104"/>
                </g>

                <!-- column body -->
                <rect x="1010" y="332" width="473" height="473" fill="#5c167d"/>

                <g fill="#6e3590">
                    <rect x="1008" y="351" width="36" height="11" rx="5"/>
                    <rect x="1008" y="457" width="32" height="10" rx="5"/>
                    <rect x="1008" y="563" width="32" height="10" rx="5"/>
                    <rect x="1008" y="669" width="32" height="10" rx="5"/>
                    <rect x="1008" y="774" width="36" height="11" rx="5"/>
                    <rect x="1449" y="351" width="36" height="11" rx="5"/>
                    <rect x="1453" y="457" width="32" height="10" rx="5"/>
                    <rect x="1453" y="563" width="32" height="10" rx="5"/>
                    <rect x="1453" y="669" width="32" height="10" rx="5"/>
                    <rect x="1449" y="774" width="36" height="11" rx="5"/>
                    <rect x="1171" y="330" width="9" height="32" rx="4.500"/>
                    <rect x="1241" y="330" width="9" height="32" rx="4.500"/>
                    <rect x="1312" y="330" width="9" height="32" rx="4.500"/>
                    <rect x="1171" y="775" width="9" height="32" rx="4.500"/>
                    <rect x="1312" y="775" width="9" height="32" rx="4.500"/>
                </g>

                <!-- stirrup and hooks -->
                <g fill="none" stroke="#8c4fa8" stroke-width="3">
                    <rect x="1025" y="347" width="442" height="442" rx="8"/>
                    <path d="M1034 360l45 55M1043 350l49 53"/>
                    <path d="M1027 775l53-53M1034 790l58-55"/>
                    <path d="M1454 787l-54-52M1463 777l-50-55"/>
                    <path d="M1400 402l52-52M1395 428l87-86"/>
                </g>

                <!-- concrete hatch -->
                <g stroke="#8a55a8" stroke-width="1.200">
                    <path d="M1010 380l48-48M1010 527l195-195M1010 672l340-340M1020 805l463-463M1163 805l320-320M1309 805l174-174M1452 805l31-31"/>
                </g>
                <path fill="none" stroke="#8a55a8" stroke-width="1.200" d="M1072 390l14 5-9 12zM1120 436l8 17-12-3zM1204 472l-6 16-10-9zM1082 518l12-20 5 24zM1265 450l7 16-14-2zM1036 536l-4 20-10-10zM1148 590l6 17-13-3zM1152 618l-1 18-12-11zM1294 604l5 18-13-2zM1440 618l4 15-13-2zM1446 636l-3 19-11-11zM1271 700l5 17-12-9zM1110 722l8 24-19-6zM1031 732l5 16-12-1zM1177 744l6 17-14-3zM1105 767l-1 16-13-9zM1322 758l-5 16 14 2zM1329 756l6 20-13-3zM1392 782l-1 17-13-7zM1468 770l7 15-14-1zM1298 525l10 19-18-3zM1412 462l7 15-14-1zM1371 406l7 14-13 1zM1441 598l6 16-14-2zM1404 485l6 14-13-1zM1331 415l6 14-14 1z"/>
                <path stroke="#8a55a8" stroke-width="1.500" stroke-linecap="round" d="M1075 360h.1M1131 372h.1M1105 455h.1M1147 430h.1M1198 402h.1M1275 390h.1M1340 360h.1M1420 385h.1M1448 420h.1M1060 470h.1M1095 505h.1M1118 520h.1M1155 495h.1M1185 510h.1M1230 520h.1M1290 480h.1M1345 450h.1M1400 440h.1M1460 500h.1M1050 585h.1M1080 620h.1M1115 600h.1M1090 660h.1M1130 650h.1M1200 620h.1M1255 630h.1M1300 590h.1M1365 620h.1M1420 610h.1M1470 560h.1M1040 690h.1M1065 680h.1M1140 660h.1M1195 710h.1M1160 720h.1M1225 738h.1M1300 690h.1M1340 660h.1M1390 645h.1M1445 695h.1M1060 725h.1M1078 780h.1M1150 790h.1M1215 770h.1M1280 765h.1M1345 695h.1M1395 755h.1M1445 750h.1"/>

                <rect x="1010" y="332" width="473" height="473" fill="none" stroke="#ffff66" stroke-width="2.500"/>

                <!-- axis lines -->
                <path d="M572 568h98" stroke="#b010a8" stroke-width="2"/>
                <path d="M670 568h75" stroke="#6a6a5a" stroke-width="1.500"/>
                <path d="M745 568h267M1041 568h275" stroke="#c01020" stroke-width="1.500"/>
                <path d="M1012 568h29M1316 568h570" stroke="#7a7a74" stroke-width="1.500"/>
                <path d="M1246 245v62M1246 578v27M1246 877v82" stroke="#7a7a74" stroke-width="1.500"/>
                <path d="M1246 307v271M1246 605v272" stroke="#c01020" stroke-width="1.500"/>
                <path d="M573 805h98" stroke="#7a1058" stroke-width="1.500"/>
                <path d="M572 331h6" stroke="#a0109a" stroke-width="2"/>
                <path d="M1484 331L1556 215" stroke="#2f8a10" stroke-width="1.500"/>

                <!-- axis bubbles -->
                <g fill="#332f00" stroke="#0b6a10" stroke-width="1.200">
                    <circle cx="1246" cy="230" r="14.500"/>
                    <circle cx="586" cy="568" r="14.500"/>
                    <circle cx="1900" cy="568" r="14.500"/>
                    <circle cx="1246" cy="973" r="14.500"/>
                </g>
                <g class="bubble-text">
                    <text x="1246" y="239">10</text>
                    <text x="586" y="577">F</text>
                    <text x="1900" y="577">F</text>
                    <text x="1246" y="982">10</text>
                </g>

                <!-- coordinate triad -->
                <path d="M631 926v-23h-6l8-14 8 14h-6v23z" fill="#14e614"/>
                <path d="M633 924h23v-6l15 8-15 8v-6h-23z" fill="#f00a0a"/>
                <circle cx="633" cy="926" r="7" fill="#0808a0"/>
                <text x="633" y="887" class="triad triad-y">Y</text>
                <text x="679" y="933" class="triad triad-x">X</text>
            </svg>

            <div class="rebar-panel">
                <div class="rebar-head">钢筋显示控制面板</div>
                <div class="rebar-body">
                    <div class="rebar-card">
                        <label class="check"><span class="box"></span>箍筋</label>
                        <label class="check"><span class="box"></span>插筋</label>
                        <label class="check"><span class="box"></span>上层柱插筋下插长度</label>
                        <label class="check"><span class="box"></span>显示其它图元</label>
                        <label class="check"><span class="box"></span>显示详细公式</label>
                    </div>
                </div>
            </div>

            <svg class="view-bar" viewBox="0 0 41 283">
                <ellipse cx="14" cy="33" rx="14" ry="5" fill="none" stroke="#555" transform="rotate(-25 14 33)"/>
                <circle cx="17" cy="29" r="12" fill="#c9ced4" stroke="#7b818c"/>
                <circle cx="28" cy="21" r="6" fill="#e4e7eb" stroke="#7b818c"/>
                <path d="M5 57l6-6h24v24l-6 5H5z" fill="#7f8ea3" stroke="#3f4a5a"/><path d="M5 57h24v23M29 57l6-6" fill="none" stroke="#3f4a5a"/>
                <text x="15" y="76" class="view-3d">3D</text>
                <path d="M5 93l6-6h24v24l-6 5H5z" fill="#cfe6fb" stroke="#3f4a5a"/><path d="M5 93h24v23M29 93l6-6M11 87v24h24M11 111l-6 5" fill="none" stroke="#3f4a5a"/>
                <path d="M15 122h7l-3.500 4z" fill="#333"/>
                <path d="M5 141l6-6h24v24l-6 5H5z" fill="#7f8ea3" stroke="#3f4a5a"/><path d="M5 141h24v23M29 141l6-6" fill="none" stroke="#3f4a5a"/>
                <path d="M15 170h7l-3.500 4z" fill="#333"/>
                <path d="M31 189a13 13 0 1 0 1 11" fill="none" stroke="#3f4a5a" stroke-width="2"/><path d="M25 191h8v-8z" fill="#3f4a5a"/>
                <path d="M15 219h7l-3.500 4z" fill="#333"/>
                <path d="M6 233h29" stroke="#80838a" stroke-width="1.500"/>
                <path d="M6 242h29v26H6z" fill="#7f8ea3" stroke="#3f4a5a"/>
                <path d="M20.500 243v25M9 249h3v3H9zM9 255h3v3H9zM9 261h3v3H9zM24 249h3v3h-3zM24 255h3v3h-3zM24 261h3v3h-3z" fill="none" stroke="#2d3542"/>
                <path d="M14 250h4M14 256h4M14 262h4M29 250h4M29 256h4M29 262h4" stroke="#2d3542"/>
            </svg>
        </div>
    </div>

    <div class="status">
        <span class="st st-xy">X = 93873 Y = 60003</span>
        <span class="st st-h">层高：3</span>
        <span class="st st-e">标高：-3~0</span>
        <span class="st st-n">1(48)</span>
        <span class="st st-hide">隐藏：0</span>
        <div class="st-btns">
            <span class="sb sb-1"><svg viewBox="0 0 20 20"><path d="M5 3v13h12M5 12h4v4" fill="none" stroke="#555" stroke-width="1.300"/></svg></span>
            <span class="sb sb-2 sb-on"><svg viewBox="0 0 20 20"><path d="M4 5h14v13H4z" fill="none" stroke="#4a8fd6" stroke-width="1.300"/><path d="M1 1h6v7H1z" fill="#f3a33f"/></svg><i>▾</i></span>
            <span class="sb sb-1 sb-gap"><svg viewBox="0 0 20 20"><path d="M3 2l14 16M17 2L3 18" stroke="#999"/></svg></span>
            <span class="sb sb-3"><svg viewBox="0 0 20 20"><path d="M3 17h14M4 16L12 4" fill="none" stroke="#555" stroke-width="1.300"/><path d="M8 11l3 3" stroke="#555"/></svg><i>▾</i></span>
            <span class="sb sb-3"><svg viewBox="0 0 20 20"><path d="M2 5h6M5 2v6" stroke="#555" stroke-width="1.300"/><path d="M9 10h9v7H9z" fill="#333"/></svg><i>▾</i></span>
            <span class="sb sb-txt sb-w1">跨图层选择</span>
            <span class="sb sb-txt sb-w2">折线选择</span>
        </div>
        <span class="st st-fps">500 FPS</span>
    </div>

    <div class="taskbar">
        <span class="task-light"></span>
        <span class="task-chip"></span>
        <span class="task-clock">10:45</span>
    </div>
</body>
</html>
```

FILE: styles.css
```css
* {
    margin: 0;
    padding: 0;
    box-sizing: border-box;
}

body {
    width: 1920px;
    height: 1040px;
    overflow: hidden;
    display: flex;
    flex-direction: column;
    font-family: "Noto Sans CJK SC", "Noto Sans", sans-serif;
    font-size: 15px;
    color: #333;
    background: #c9cacc;
}

i {
    font-style: normal;
}

.defs {
    position: absolute;
}

.ico {
    width: 20px;
    height: 20px;
    flex: none;
}

.ico-big {
    width: 36px;
    height: 36px;
    flex: none;
}

/* title bar and tabs */
.top {
    height: 52px;
    display: flex;
    background: #fff;
}

.logo-box {
    position: relative;
    width: 56px;
    padding: 10px 0 0 11px;
}

.logo {
    width: 36px;
    height: 35px;
    display: block;
}

.logo-grip {
    position: absolute;
    left: 47px;
    top: 45px;
    border-left: 5px solid transparent;
    border-bottom: 5px solid #8a8a8a;
}

.top-main {
    flex: 1;
    display: flex;
    flex-direction: column;
}

.title-row {
    height: 28px;
    display: flex;
    align-items: center;
}

.quick {
    display: flex;
    align-items: center;
    margin-left: 8px;
}

.q {
    width: 29px;
    height: 25px;
    display: flex;
    align-items: center;
    justify-content: center;
}

.q-on {
    background: #cfe0f2;
}

.q-sigma {
    font-size: 20px;
    color: #3b7fd0;
    font-family: "Liberation Sans", sans-serif;
}

.q-caret {
    width: 11px;
    font-size: 10px;
    color: #aaa;
    text-align: center;
}

.q-more {
    color: #666;
}

.app-title {
    margin: 0 0 3px 152px;
    font-size: 15.500px;
    white-space: nowrap;
    line-height: 24px;
}

.win-btns {
    width: 136px;
    height: 28px;
    margin-left: auto;
}

.tab-row {
    height: 24px;
    display: flex;
    padding-left: 6px;
}

.tab {
    padding: 0 16.200px;
    line-height: 23px;
    color: #444;
    border-radius: 3px 3px 0 0;
}

.tab-on {
    background: #5aa9f2;
    color: #fff;
}

.help-search {
    width: 305px;
    height: 22px;
    margin-left: auto;
    display: flex;
    align-items: center;
    justify-content: space-between;
    padding: 0 8px 0 4px;
    border: 1px solid #d4d4d4;
    font-size: 13.500px;
    color: #666;
}

.help-glass {
    width: 14px;
    height: 14px;
}

.help-icons {
    width: 182px;
    height: 24px;
}

.help-q {
    font-family: "Liberation Sans", sans-serif;
    font-size: 20px;
    fill: #888;
}

/* ribbon */
.ribbon {
    height: 123px;
    display: flex;
    background: linear-gradient(#fff 55%, #e8eaeb);
    border-top: 1px solid #e6e6e6;
    border-bottom: 2px solid #8f9093;
}

.group {
    position: relative;
    display: flex;
    flex-direction: column;
    padding-top: 3px;
    border-right: 1px solid #d6d8da;
}

.tools {
    height: 86px;
    display: grid;
    grid-auto-flow: row;
    grid-template-rows: repeat(3, 28.500px);
}

.tool {
    display: flex;
    align-items: center;
    gap: 4px;
    white-space: nowrap;
    color: #333;
    line-height: 24px;
    padding-bottom: 2px;
}

.tool svg {
    position: relative;
    top: 1px;
}

.tool i {
    margin-left: 5px;
    font-size: 10px;
    color: #666;
}

.tool.off {
    color: #aaa;
}

.big {
    grid-row: 1 / -1;
    display: flex;
    flex-direction: column;
    align-items: center;
    padding-top: 6px;
    white-space: nowrap;
}

.big span {
    margin-top: 5px;
    line-height: 20px;
}

.big i {
    font-size: 10px;
    line-height: 10px;
    color: #666;
}

.big.off {
    color: #aaa;
}

.group-name {
    height: 24px;
    margin-top: 4px;
    line-height: 24px;
    text-align: center;
    color: #444;
}

.group-name i {
    font-size: 13px;
    color: #666;
    margin-left: 7px;
}

.g-select {
    width: 182px;
}

.g-select .tools {
    margin-left: 8px;
    grid-template-columns: 58px 1fr;
}

.g-cad {
    width: 242px;
}

.g-cad .tools {
    margin-left: 11px;
    grid-template-columns: 100px 1fr;
}

.g-common {
    width: 346px;
}

.g-common .tools {
    margin-left: 11px;
    grid-template-columns: 83px 140px 1fr;
}

.g-modify {
    width: 295px;
}

.g-modify .tools {
    margin-left: 11px;
    grid-template-columns: 67px 68px 67px 1fr;
}

.g-modify .tool {
    gap: 3px;
}

.g-draw {
    width: 149px;
}

.g-draw .tools {
    margin-left: 7px;
    grid-template-columns: 54px 52px 1fr;
}

.g-draw .tool {
    padding-left: 3px;
}

.g-recog {
    width: 462px;
}

.g-recog .tools {
    grid-template-columns: 80px 74px 69px 122px 1fr;
}

.g-recog .tool {
    gap: 3px;
}

.g-recog .tool:nth-child(5) {
    gap: 6px;
}

.g-second {
    flex: 1;
    border-right: none;
}

.g-second .tools {
    margin-left: 11px;
    grid-template-columns: 112px 1fr;
}

.g-second .tool {
    gap: 3px;
}

.g-second .tool i {
    margin-left: 0;
}

/* combo row */
.combo-bar {
    height: 35px;
    padding: 5px 4px 0;
    display: flex;
    gap: 7.500px;
}

.combo {
    width: 124px;
    height: 27px;
    background: #fff;
    display: flex;
    align-items: center;
    justify-content: space-between;
    padding: 0 6px 2px 4px;
    border-radius: 2px;
}

.combo i {
    font-size: 10px;
    color: #666;
}

/* main area */
.main {
    height: 782px;
    display: flex;
    border-top: 2px solid #85878b;
    background: #fff;
}

.nav {
    width: 211px;
    margin-left: 2px;
    display: flex;
    flex-direction: column;
    border-right: 1px solid #ddd;
}

.nav-head {
    height: 25px;
    padding-left: 9px;
    line-height: 22px;
    color: #777;
    background: #efefef;
    border-bottom: 1px solid #d0d0d0;
}

.nav-tools {
    height: 38px;
    display: flex;
    align-items: center;
    gap: 5px;
    padding: 0 4px 0 8px;
    background: #efefef;
    border-bottom: 1px solid #d0d0d0;
}

.nav-pin {
    width: 18px;
    height: 16px;
    margin-right: auto;
}

.view-btn {
    width: 31px;
    height: 30px;
    display: flex;
    align-items: center;
    justify-content: center;
    border: 1px solid #7db8f0;
    border-radius: 4px;
    background: #f6fbff;
}

.view-btn svg {
    width: 20px;
    height: 20px;
}

.tree {
    position: relative;
    flex: 1;
    padding-top: 4px;
    overflow: hidden;
    background: #fff;
}

.tree-thumb {
    position: absolute;
    left: 197px;
    top: 15px;
    width: 9px;
    height: 530px;
    border-radius: 5px;
    background: #cdcdcd;
}

.node {
    height: 30px;
    display: flex;
    align-items: center;
    padding: 0 0 2px 5px;
    gap: 4px;
    color: #333;
}

.folder {
    width: 20px;
    height: 18px;
    flex: none;
    position: relative;
    top: 1px;
}

.leaf {
    margin-left: 49px;
    width: 134px;
    padding-left: 7px;
    gap: 8px;
}

.leaf-on {
    height: 26px;
    margin-top: 2px;
    margin-bottom: 2px;
    background: #c7d9f0;
}

.leaf-ico {
    width: 18px;
    height: 18px;
    flex: none;
    position: relative;
    top: 1px;
}

.mid {
    width: 344px;
    margin-left: 5px;
    display: flex;
    flex-direction: column;
    background: #dcdcdc;
}

.panel {
    display: flex;
    flex-direction: column;
    background: #efefef;
}

.panel-list {
    height: 460px;
    border-bottom: 1px solid #c8c8c8;
}

.panel-props {
    height: 315px;
    margin-top: 5px;
}

.panel-bar {
    height: 14px;
    padding-right: 6px;
    text-align: right;
    font-size: 10px;
    line-height: 14px;
    color: #888;
    background: #cfd0d1;
}

.panel-tabs {
    height: 27px;
    display: flex;
    background: #efefef;
    border-bottom: 1px solid #d0d0d0;
}

.ptab {
    width: 81px;
    text-align: center;
    line-height: 26px;
    color: #999;
    background: #dfdfdf;
    border-right: 1px solid #d0d0d0;
}

.ptab-on {
    color: #333;
    font-weight: 700;
    background: #f0f0f0;
}

.list-tools {
    height: 37px;
    display: flex;
    align-items: center;
    position: relative;
    padding-bottom: 2px;
    border-bottom: 1px solid #d0d0d0;
}

.lt {
    display: flex;
    align-items: center;
    gap: 6px;
    color: #444;
}

.lt i {
    font-size: 10px;
    margin-left: 7px;
    color: #666;
}

.lt-new {
    margin-left: 6px;
}

.lt-copy {
    margin-left: 13px;
}

.lt-del {
    margin-left: 17px;
}

.lt-more {
    margin-left: auto;
    padding-right: 2px;
    font-size: 10px;
    color: #777;
}

.ico-sm {
    width: 18px;
    height: 18px;
    flex: none;
}

.list-search {
    height: 25px;
    display: flex;
    align-items: center;
    justify-content: space-between;
    padding: 0 6px 0 4px;
    color: #aaa;
    background: #fff;
    border-bottom: 1px solid #d0d0d0;
}

.ico-search {
    width: 14px;
    height: 14px;
}

.items {
    position: relative;
    flex: 1;
    overflow: hidden;
    padding-left: 76px;
    background: #fff;
}

.items-thumb {
    position: absolute;
    right: 4px;
    top: 54px;
    width: 9px;
    height: 270px;
    border-radius: 5px;
    background: #cdcdcd;
}

.item {
    width: 51px;
    height: 26.300px;
    padding-left: 4px;
    line-height: 24px;
    font-family: "Noto Sans", sans-serif;
}

.item-on {
    background: #c7d9f0;
}

.props {
    position: relative;
    height: 236px;
    overflow: hidden;
    background: #fff;
}

.props-table {
    width: 322px;
    table-layout: fixed;
    border-collapse: collapse;
}

.props-table tr {
    height: 26.300px;
}

.props-table th,
.props-table td {
    font-weight: 400;
    border-right: 1px solid #e0e0e0;
    border-bottom: 1px solid #e0e0e0;
    white-space: nowrap;
    overflow: hidden;
}

.idx {
    width: 27px;
    text-align: center;
    background: #efefef;
    font-family: "Noto Sans", sans-serif;
}

.pname {
    width: 127px;
    padding-left: 4px;
    color: #2f6fe8;
    letter-spacing: -.300px;
}

.pval {
    padding-left: 4px;
    font-family: "Noto Sans", "Noto Sans CJK SC", sans-serif;
}

.pval b {
    font-weight: 400;
    font-size: 14px;
    position: relative;
    top: -3px;
    font-family: "Noto Sans CJK SC", sans-serif;
}

.head th {
    color: #555;
    text-align: center;
    background: #efefef;
}

.group-row .pval {
    background: #eaeaea;
}

.props-scroll {
    position: absolute;
    right: 0;
    top: 0;
    width: 22px;
    height: 236px;
    display: flex;
    flex-direction: column;
    align-items: center;
}

.arr {
    font-size: 9px;
    line-height: 12px;
    color: #222;
}

.arr-down {
    margin-top: auto;
    margin-bottom: 2px;
}

.props-thumb {
    width: 8px;
    height: 32px;
    border-radius: 4px;
    background: #cdcdcd;
}

.props-foot {
    flex: 1;
    padding: 3px 0 0 7px;
}

.foot-btn {
    display: block;
    width: 99px;
    height: 29px;
    text-align: center;
    line-height: 26px;
    color: #444;
    background: #f2f2f2;
    border: 1px solid #c8cfd9;
    border-radius: 3px;
}

.splitter {
    width: 6px;
    background: #fff;
}

.grip {
    display: block;
    height: 124px;
    margin-top: 328px;
    background: #3c4858;
}

.canvas {
    position: relative;
    flex: 1;
}

.drawing {
    display: block;
    width: 1352px;
    height: 780px;
}

.bubble-text text {
    font-family: "Liberation Sans", sans-serif;
    font-size: 24px;
    fill: #f2f2f2;
    text-anchor: middle;
}

.triad {
    font-family: "Liberation Sans", sans-serif;
    font-size: 20px;
    text-anchor: middle;
}

.triad-y {
    fill: #14c814;
}

.triad-x {
    fill: #c81010;
}

/* floating panels on the drawing */
.rebar-panel {
    position: absolute;
    left: 10px;
    top: 9px;
    width: 263px;
    height: 235px;
    background: #eeeeee;
    border-bottom: 1px solid #c8c8c8;
}

.rebar-head {
    height: 33px;
    padding-left: 10px;
    line-height: 31px;
    color: #e6f0fb;
    background: #2e82e0;
}

.rebar-body {
    padding: 26px 16px 0;
}

.rebar-card {
    height: 160px;
    padding-top: 6px;
    background: #fff;
    border: 1px solid #c8ccd2;
    border-radius: 4px;
}

.check {
    height: 28.700px;
    display: flex;
    align-items: center;
    gap: 9px;
    padding-left: 12px;
    color: #222;
}

.box {
    position: relative;
    width: 17px;
    height: 17px;
    border-radius: 3px;
    background: #57a5f5;
}

.box::after {
    content: "";
    position: absolute;
    left: 6px;
    top: 3px;
    width: 5px;
    height: 9px;
    border: solid #fff;
    border-width: 0 2px 2px 0;
    transform: rotate(40deg);
}

.view-bar {
    position: absolute;
    left: 1307px;
    top: 3px;
    width: 41px;
    height: 283px;
    background: #a3a5a8;
}

.view-3d {
    font-family: "Liberation Mono", monospace;
    font-size: 9px;
    fill: #1f2835;
}

/* status bar */
.status {
    height: 37px;
    display: flex;
    align-items: center;
    color: #666;
    background: #dcdcde;
    border-bottom: 1px solid #fff;
}

.st {
    white-space: nowrap;
    font-family: "Noto Sans", "Noto Sans CJK SC", sans-serif;
}

.st-xy {
    width: 331px;
    padding-left: 3px;
    letter-spacing: .800px;
}

.st-h {
    width: 104px;
    word-spacing: 3px;
}

.st-e {
    width: 167px;
}

.st-n {
    width: 127px;
}

.st-hide {
    width: 130px;
}

.st-btns {
    display: flex;
    height: 31px;
    gap: 4px;
}

.sb {
    height: 31px;
    display: flex;
    align-items: center;
    justify-content: center;
    background: #cfd0d2;
    border: 1px solid #bdbec0;
    border-bottom: 2px solid #a9aaac;
    color: #555;
}

.sb svg {
    width: 20px;
    height: 20px;
}

.sb i {
    font-size: 9px;
    margin-left: 3px;
}

.sb-1 {
    width: 31px;
}

.sb-2 {
    width: 45px;
}

.sb-3 {
    width: 45px;
}

.sb-on {
    background: #fff;
    border-color: #6fb0f0;
}

.sb-gap {
    margin-left: 3px;
}

.sb-w1 {
    width: 90px;
}

.sb-w2 {
    width: 75px;
}

.st-fps {
    margin-left: auto;
    padding-right: 45px;
}

.taskbar {
    position: relative;
    height: 10px;
    overflow: hidden;
    background: #1a1a1a;
}

.task-light {
    position: absolute;
    left: 60px;
    top: 0;
    width: 430px;
    height: 10px;
    background: #efefef;
}

.task-chip {
    position: absolute;
    left: 803px;
    top: 0;
    width: 60px;
    height: 10px;
    background: #555;
}

.task-clock {
    position: absolute;
    left: 1787px;
    top: 3px;
    font-size: 13px;
    line-height: 16px;
    color: #eee;
}
```
